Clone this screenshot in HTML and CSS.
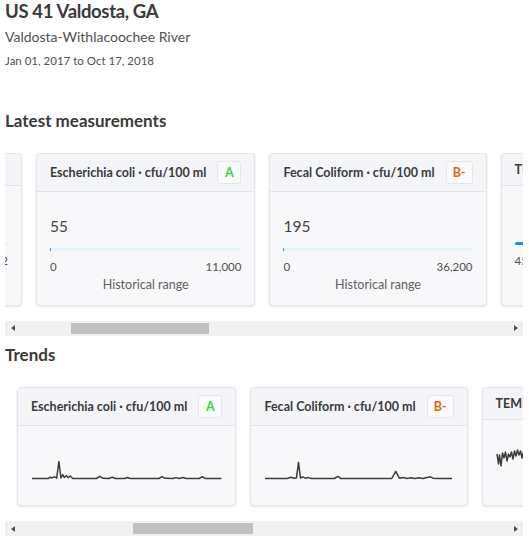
FILE: index.html
```html
<!DOCTYPE html>
<html lang="en">
<head>
<meta charset="utf-8">
<title>US 41 Valdosta, GA</title>
<link rel="stylesheet" href="styles.css">
</head>
<body>
<main class="page">
  <h1 class="site-title">US 41 Valdosta, GA</h1>
  <p class="site-sub">Valdosta-Withlacoochee River</p>
  <p class="site-date">Jan 01, 2017 to Oct 17, 2018</p>

  <section class="section section-latest">
    <h2 class="section-title">Latest measurements</h2>
    <div class="scroller" data-offset="30.7">
      <div class="track">
        <article class="card card-wide">
          <header class="card-head"><span class="card-title">PH · units</span></header>
          <div class="card-body">
            <div class="value">7.1</div>
            <div class="bar"><div class="bar-fill" style="width:58%"></div></div>
            <div class="range"><span>0</span><span>12</span></div>
            <div class="range-label">Historical range</div>
          </div>
        </article>
        <article class="card anchor">
          <header class="card-head"><span class="card-title">Escherichia coli · cfu/100 ml</span><span class="badge badge-a">A</span></header>
          <div class="card-body">
            <div class="value">55</div>
            <div class="bar"><div class="bar-fill" style="width:0.5%"></div></div>
            <div class="range"><span>0</span><span>11,000</span></div>
            <div class="range-label">Historical range</div>
          </div>
        </article>
        <article class="card">
          <header class="card-head"><span class="card-title">Fecal Coliform · cfu/100 ml</span><span class="badge badge-b">B-</span></header>
          <div class="card-body">
            <div class="value">195</div>
            <div class="bar"><div class="bar-fill" style="width:0.5%"></div></div>
            <div class="range"><span>0</span><span>36,200</span></div>
            <div class="range-label">Historical range</div>
          </div>
        </article>
        <article class="card">
          <header class="card-head"><span class="card-title">TEMPERATURE · °F</span></header>
          <div class="card-body">
            <div class="value">&nbsp;</div>
            <div class="bar"><div class="bar-fill bar-fill-strong" style="width:62%"></div></div>
            <div class="range"><span>45</span><span>88</span></div>
            <div class="range-label">Historical range</div>
          </div>
        </article>
        <article class="card">
          <header class="card-head"><span class="card-title">DISSOLVED OXYGEN · mg/l</span></header>
          <div class="card-body">
            <div class="value">7.2</div>
            <div class="bar"><div class="bar-fill" style="width:70%"></div></div>
            <div class="range"><span>2.1</span><span>11.4</span></div>
            <div class="range-label">Historical range</div>
          </div>
        </article>
      </div>
    </div>
    <div class="scrollbar">
      <span class="sb-btn sb-left"></span>
      <span class="sb-track"><span class="sb-thumb" style="margin-left:51px;width:138px"></span></span>
      <span class="sb-btn sb-right"></span>
    </div>
  </section>

  <section class="section section-trends">
    <h2 class="section-title">Trends</h2>
    <div class="scroller" data-offset="12.3">
      <div class="track">
        <article class="card">
          <header class="card-head"><span class="card-title">DISSOLVED OXYGEN · mg/l</span></header>
          <div class="trend-body">
            <svg class="spark" viewBox="0 0 188 26" preserveAspectRatio="none"><path d="M0 12 L20 14 L40 10 L60 15 L80 11 L100 13 L120 9 L140 14 L160 12 L188 13"/></svg>
          </div>
        </article>
        <article class="card card-wide">
          <header class="card-head"><span class="card-title">PH · units</span></header>
          <div class="trend-body">
            <svg class="spark" viewBox="0 0 188 26" preserveAspectRatio="none"><path d="M0 14 L30 12 L60 15 L90 11 L120 13 L150 12 L188 14"/></svg>
          </div>
        </article>
        <article class="card anchor">
          <header class="card-head"><span class="card-title">Escherichia coli · cfu/100 ml</span><span class="badge badge-a">A</span></header>
          <div class="trend-body">
            <svg class="spark" viewBox="0 0 188 26" preserveAspectRatio="none"><path d="M0 23.5 L16 23.5 L18 22.3 L20 23 L22 21.5 L24.5 23.2 L26.7 6.5 L28.7 23 L30.5 19.5 L32 22.5 L34 20.5 L36 22.8 L38 21 L40.5 23.5 L64 23.5 L67.3 21.3 L70.5 23.3 L76 23.5 L79.7 22.3 L83 23.5 L92 23.5 L94.7 22.5 L97.5 23.5 L126 23.5 L129 21.6 L132 23.3 L140 23.5 L143 22.6 L146 23.5 L150 22.5 L153 23.5 L166 23.5 L169 21.7 L172 23.5 L188 23.5"/></svg>
          </div>
        </article>
        <article class="card">
          <header class="card-head"><span class="card-title">Fecal Coliform · cfu/100 ml</span><span class="badge badge-b">B-</span></header>
          <div class="trend-body">
            <svg class="spark" viewBox="0 0 186 26" preserveAspectRatio="none"><path d="M0 23.5 L22 23.5 L25.7 22.3 L29 23.3 L31.3 22.8 L33.3 7.4 L35.3 23 L37.5 21.8 L40 23.2 L43 22.6 L46 23.5 L69 23.5 L72.3 21.4 L75.5 23.5 L126 23.5 L130 16.4 L133.5 23.2 L138 22.6 L141 23.5 L145 22.8 L149 23.5 L153 22.8 L157 23.5 L161 22.6 L164 21.7 L167 23.2 L171 23.5 L186 23.5"/></svg>
          </div>
        </article>
        <article class="card">
          <header class="card-head"><span class="card-title">TEMPERATURE · °F</span></header>
          <div class="trend-body">
            <svg class="spark" viewBox="0 0 188 26" preserveAspectRatio="none"><path d="M0 5 L1.5 15 L2.5 6 L4 17 L5.5 4 L7 9 L8.5 3 L10 12 L11.5 5 L13 8 L14.5 3 L16 10 L17.5 2 L19 7 L20.5 1 L22 6 L23.5 2 L25 9 L26.5 3 L28 7 L30 2 L32 8 L34 3 L36 10 L38 4 L40 9 L42 2 L44 8 L46 4 L48 11 L50 5 L52 9 L54 3 L56 12 L58 6 L60 10 L62 4 L64 13 L66 7 L68 11 L70 5 L72 14 L74 8 L76 12 L78 6 L80 15 L82 9 L84 13 L86 7 L88 16 L90 10 L92 14 L94 8 L96 15 L98 11 L100 16 L102 9 L104 14 L106 10 L108 17 L110 12 L112 15 L114 9 L116 16 L118 11 L120 14 L122 8 L124 13 L126 7 L128 12 L130 6 L132 11 L134 5 L136 10 L138 4 L140 9 L142 3 L144 8 L146 4 L148 10 L150 5 L152 9 L154 3 L156 8 L158 4 L160 11 L162 6 L164 10 L166 5 L168 12 L170 7 L172 11 L174 6 L176 13 L178 8 L180 12 L182 7 L184 14 L186 9 L188 12"/></svg>
          </div>
        </article>
        <article class="card">
          <header class="card-head"><span class="card-title">TURBIDITY · NTU</span></header>
          <div class="trend-body">
            <svg class="spark" viewBox="0 0 188 26" preserveAspectRatio="none"><path d="M0 22 L30 21 L50 12 L60 22 L100 21 L120 15 L130 22 L188 22"/></svg>
          </div>
        </article>
      </div>
    </div>
    <div class="scrollbar">
      <span class="sb-btn sb-left"></span>
      <span class="sb-track"><span class="sb-thumb" style="margin-left:113px;width:120px"></span></span>
      <span class="sb-btn sb-right"></span>
    </div>
  </section>
</main>
<script src="script.js"></script>
</body>
</html>
```

FILE: styles.css
```css
* { box-sizing: border-box; }

html, body {
  margin: 0;
  padding: 0;
  background: #ffffff;
}

body {
  font-family: Lato, "Noto Sans", "Liberation Sans", sans-serif;
  color: #444444;
}

.page {
  width: 518px;
  margin-left: 5px;
}

.site-title {
  margin: 0;
  font-size: 18.5px;
  line-height: 23px;
  font-weight: 700;
  letter-spacing: -0.35px;
  color: #3a3a3a;
}

.site-sub {
  margin: 5px 0 0;
  font-size: 14px;
  line-height: 18px;
  color: #505050;
}

.site-date {
  margin: 7px 0 0;
  font-size: 11.5px;
  line-height: 16px;
  color: #505050;
}

.section-title {
  margin: 0;
  font-size: 17px;
  line-height: 20px;
  font-weight: 700;
  color: #3a3a3a;
}

.section-latest .section-title { margin-top: 41.5px; }
.section-trends .section-title { margin-top: 9px; }

.scroller {
  position: relative;
  overflow: hidden;
  padding: 3px 0 15px;
}

.section-latest .scroller { margin-top: 19.2px; }
.section-trends .scroller { margin-top: 19.5px; }

.track {
  display: flex;
  gap: 14px;
  width: max-content;
  padding-right: 14px;
}

.card {
  flex: none;
  display: flex;
  flex-direction: column;
  background: #f8f8fa;
  border: 1px solid #e4e5e8;
  border-radius: 4px;
  box-shadow: 0 1px 3px rgba(0, 0, 0, 0.10);
}

.card-wide { min-width: 200px; }

.card-head {
  display: flex;
  align-items: center;
  gap: 11px;
  padding: 7px 13px 7px 13px;
  min-height: 23px;
  background: #f4f5f8;
  border-bottom: 1px solid #e3e4e8;
  border-radius: 4px 4px 0 0;
}

.card-title {
  font-size: 12.5px;
  line-height: 17px;
  font-weight: 700;
  color: #3a3a3a;
  white-space: nowrap;
}

.badge {
  display: flex;
  align-items: center;
  justify-content: center;
  min-width: 24px;
  height: 23px;
  padding: 0 6px;
  background: #fafafa;
  border: 1px solid #e6e6e8;
  border-radius: 3px;
  font-size: 12.5px;
  font-weight: 700;
}

.badge-a { color: #22dd3a; }
.badge-b { color: #e2650e; }

.card-body {
  flex: 1;
  padding: 24px 13px 13px;
}

.value {
  font-size: 15.5px;
  line-height: 20px;
  color: #444444;
}

.bar {
  margin-top: 12px;
  height: 3px;
  background: #e2f4fd;
  border-radius: 2px;
}

.bar-fill {
  height: 3px;
  min-width: 1px;
  background: #1e8fe2;
  border-radius: 2px;
}

.range {
  display: flex;
  justify-content: space-between;
  margin-top: 9px;
  font-size: 11.5px;
  line-height: 14px;
  color: #505050;
}

.range-label {
  margin-top: 4px;
  text-align: center;
  font-size: 12.5px;
  line-height: 14px;
  color: #606060;
}

.trend-body {
  flex: 1;
  padding: 29px 14px 24px;
}

.spark {
  display: block;
  width: 100%;
  height: 26px;
  overflow: visible;
}

.spark path {
  fill: none;
  stroke: #3c3c3c;
  stroke-width: 1.5;
  stroke-linejoin: round;
  vector-effect: non-scaling-stroke;
}

.scrollbar {
  display: flex;
  height: 15px;
  background: #f1f1f1;
}

.sb-btn {
  flex: none;
  width: 15px;
  height: 15px;
  display: flex;
  align-items: center;
  justify-content: center;
}

.sb-btn::before {
  content: "";
  width: 0;
  height: 0;
  border-top: 3.5px solid transparent;
  border-bottom: 3.5px solid transparent;
}

.sb-left::before { border-right: 4px solid #505050; }
.sb-right::before { border-left: 4px solid #505050; }

.sb-track {
  flex: 1;
  display: flex;
}

.sb-thumb {
  height: 11px;
  margin-top: 2px;
  background: #c1c1c1;
}
```

FILE: script.js
```js
document.querySelectorAll('.scroller').forEach(function (s) {
  var anchor = s.querySelector('.anchor');
  var off = parseFloat(s.getAttribute('data-offset')) || 0;
  if (anchor) {
    s.scrollLeft = Math.round(anchor.offsetLeft - off);
  }
});
```
